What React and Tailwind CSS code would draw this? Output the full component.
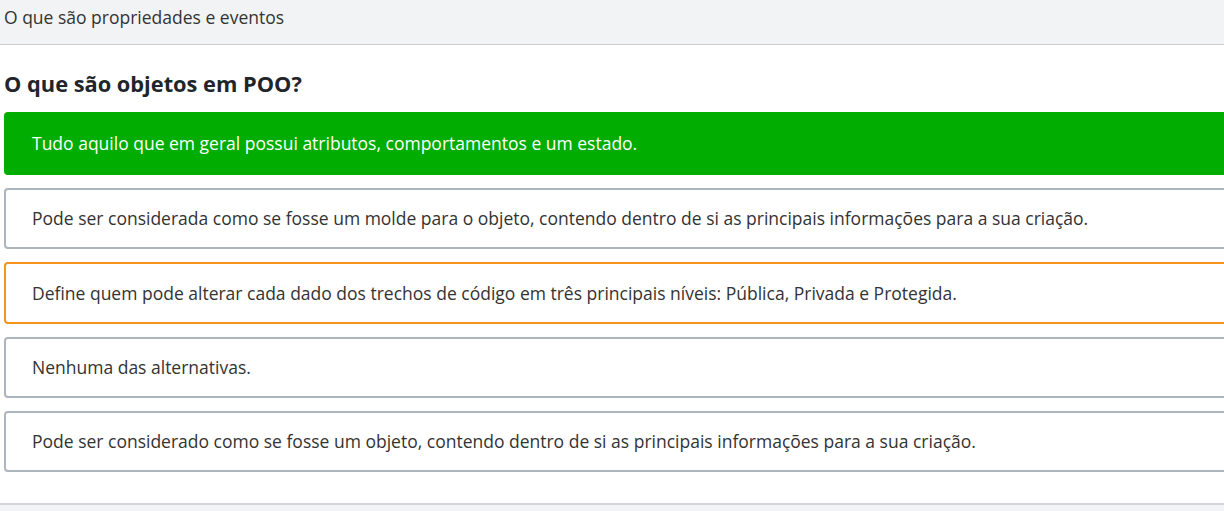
export default function App() {
  const options = [
    { text: "Tudo aquilo que em geral possui atributos, comportamentos e um estado.", kind: "correct" },
    { text: "Pode ser considerada como se fosse um molde para o objeto, contendo dentro de si as principais informações para a sua criação.", kind: "normal" },
    { text: "Define quem pode alterar cada dado dos trechos de código em três principais níveis: Pública, Privada e Protegida.", kind: "selected" },
    { text: "Nenhuma das alternativas.", kind: "normal" },
    { text: "Pode ser considerado como se fosse um objeto, contendo dentro de si as principais informações para a sua criação.", kind: "normal" },
  ];
  return (
    <div
      className="w-screen h-[511px] overflow-hidden bg-white text-[#333]"
      style={{ fontFamily: '"Open Sans", "Noto Sans", sans-serif' }}
    >
      <div className="h-[45px] bg-[#f2f3f5] border-b border-[#c9cdd2] px-[4px] pt-[4px] text-[17.5px] leading-[26px] text-[#333]">
        O que são propriedades e eventos
      </div>
      <div className="pl-[4px] w-[1260px]">
        <h2 className="mt-[24px] text-[21.8px] leading-[30px] font-bold text-[#212529]">O que são objetos em POO?</h2>
        <div className="mt-[13px] flex flex-col gap-[13px]">
          {options.map((o, i) => (
            <div
              key={i}
              className={
                o.kind === "correct"
                  ? "h-[63px] rounded-[4px] bg-[#00ad00] text-white flex items-center px-[28px] text-[17.5px]"
                  : o.kind === "selected"
                  ? "h-[62px] rounded-[4px] border-2 border-[#f7941d] bg-white text-[#333] flex items-center px-[26px] text-[17.5px]"
                  : "h-[61px] rounded-[4px] border-2 border-[#adb5bd] bg-white text-[#333] flex items-center px-[26px] text-[17.5px]"
              }
            >
              {o.text}
            </div>
          ))}
        </div>
        <div className="mt-[31px] h-[20px] bg-[#f2f3f5] border-t-2 border-[#d2d6da] -ml-[4px]"></div>
      </div>
    </div>
  );
}
